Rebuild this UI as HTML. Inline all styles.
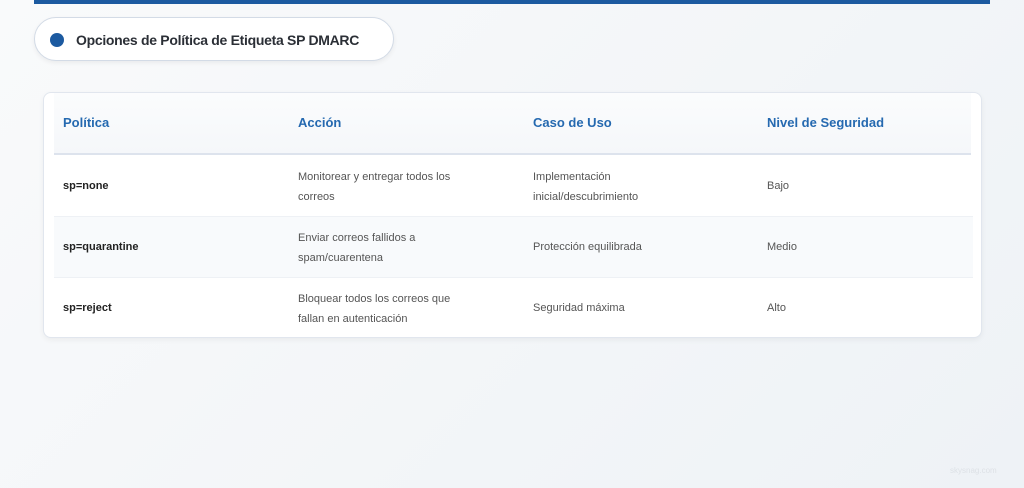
<!DOCTYPE html>
<html><head><meta charset="utf-8"><style>
*{margin:0;padding:0;box-sizing:border-box}
body{width:1024px;height:488px;overflow:hidden;background:linear-gradient(135deg,#f9fafb,#eef2f6);font-family:"Liberation Sans",sans-serif;position:relative}
.bar{position:absolute;left:34px;top:0;width:956px;height:4px;background:#1c5aa0}
.pill{position:absolute;left:34px;top:17px;width:360px;height:44px;background:#fff;border:1px solid #d3dbe6;border-radius:22px;box-shadow:0 2px 5px rgba(0,0,0,.06)}
.pill .dot{position:absolute;left:15px;top:15px;width:14px;height:14px;border-radius:50%;background:#1c5aa0}
.pill span{position:absolute;left:41px;top:14px;font-size:14px;font-weight:bold;color:#2b2f36;letter-spacing:-0.3px}
.card{position:absolute;left:43px;top:92px;width:939px;height:246px;background:#fff;border:1px solid #e1e6ee;border-radius:8px;box-shadow:0 2px 6px rgba(0,0,0,.05);overflow:hidden}
.head{height:62px;background:linear-gradient(180deg,#fbfcfd,#f5f7fa);border-bottom:2px solid #dde3ed;margin:0 10px;position:relative}
.head div{position:absolute;top:22px;font-size:13px;font-weight:bold;color:#2569b0}
.row{position:absolute;left:10px;width:919px;height:61px;border-bottom:1px solid #eef1f5}
.row div{position:absolute;font-size:11px;color:#555;line-height:20px}
.row .p{font-weight:bold;color:#222}
.c1{left:9px}.c2{left:244px}.c3{left:479px}.c4{left:713px}
</style></head><body>
<div class="bar"></div>
<div class="pill"><div class="dot"></div><span>Opciones de Política de Etiqueta SP DMARC</span></div>
<div class="card">
<div class="head"><div class="c1">Política</div><div class="c2">Acción</div><div class="c3">Caso de Uso</div><div class="c4">Nivel de Seguridad</div></div>
<div class="row" style="top:63px"><div class="c1 p" style="top:20px">sp=none</div><div class="c2" style="top:11px">Monitorear y entregar todos los<br>correos</div><div class="c3" style="top:11px">Implementación<br>inicial/descubrimiento</div><div class="c4" style="top:20px">Bajo</div></div>
<div class="row" style="top:124px;background:#f8fafc"><div class="c1 p" style="top:20px">sp=quarantine</div><div class="c2" style="top:11px">Enviar correos fallidos a<br>spam/cuarentena</div><div class="c3" style="top:20px">Protección equilibrada</div><div class="c4" style="top:20px">Medio</div></div>
<div class="row" style="top:185px;border:none"><div class="c1 p" style="top:20px">sp=reject</div><div class="c2" style="top:11px">Bloquear todos los correos que<br>fallan en autenticación</div><div class="c3" style="top:20px">Seguridad máxima</div><div class="c4" style="top:20px">Alto</div></div>
</div>
<div style="position:absolute;left:950px;top:466px;font-size:8px;color:#dde1e6">skysnag.com</div>
</body></html>
